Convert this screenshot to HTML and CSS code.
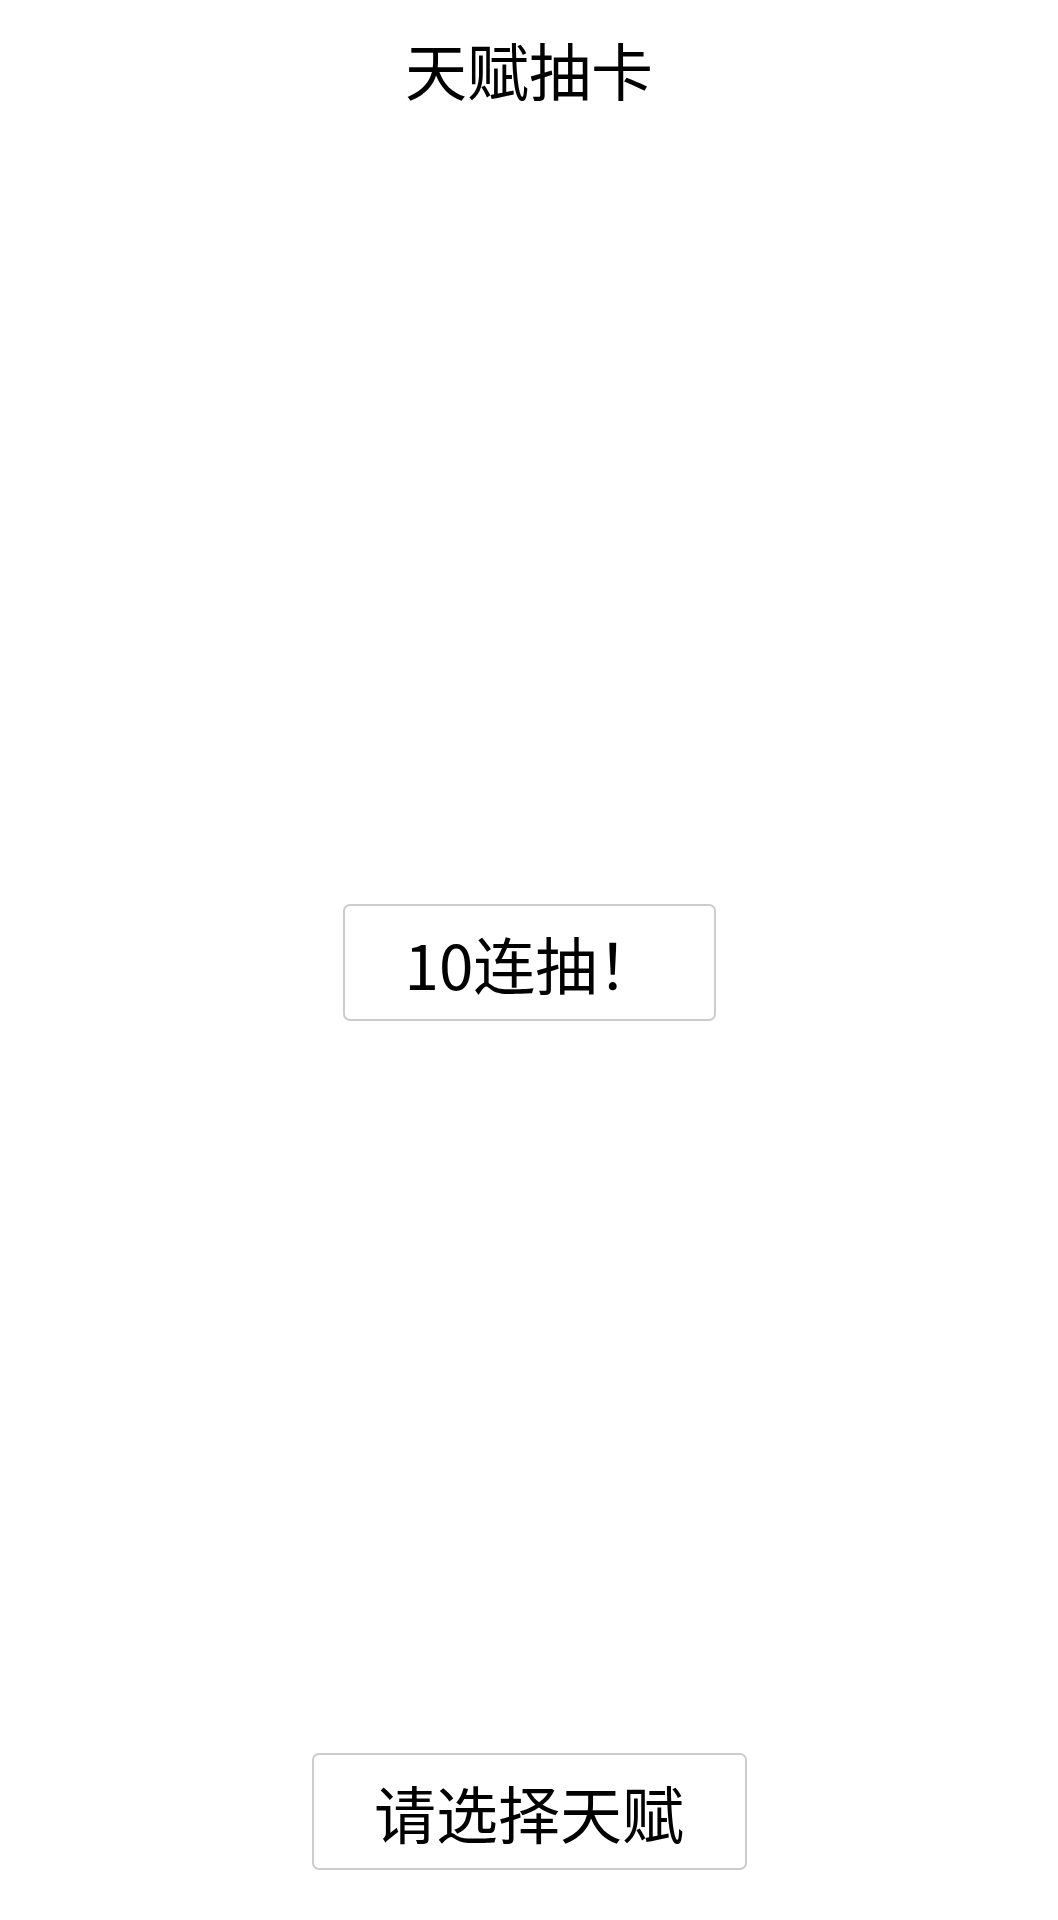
FILE: index.html
```html
<!DOCTYPE html>
<html lang="zh-CN">
<head>
<meta charset="utf-8">
<title>天赋抽卡</title>
<link rel="stylesheet" href="styles.css">
</head>
<body>
<div class="page">
  <header class="title">天赋抽卡</header>
  <main class="center">
    <button class="btn btn-draw">10连抽！</button>
  </main>
  <footer class="bottom">
    <button class="btn btn-select">请选择天赋</button>
  </footer>
</div>
</body>
</html>
```
FILE: styles.css
```css
html, body {
  margin: 0;
  padding: 0;
  background: #ffffff;
}
body {
  font-family: "Noto Sans CJK SC", "Noto Sans", sans-serif;
  color: #000;
}
.page {
  height: 1920px;
  display: flex;
  flex-direction: column;
  align-items: center;
}
.title {
  font-size: 62px;
  line-height: 62px;
  margin-top: 38px;
  text-align: center;
}
.center {
  flex: 1;
  display: flex;
  align-items: center;
  justify-content: center;
  width: 100%;
}
.bottom {
  display: flex;
  justify-content: center;
  padding-bottom: 50px;
}
.btn {
  font-family: "Noto Sans CJK SC", "Noto Sans", sans-serif;
  font-size: 62px;
  line-height: 1;
  color: #000;
  background: #fff;
  border: 2px solid #cccccc;
  border-radius: 7px;
  height: 117px;
  box-sizing: border-box;
  white-space: nowrap;
}
.btn-draw {
  width: 373px;
  margin-top: 72px;
  text-align: left;
  padding: 0 0 0 60px;
}
.btn-select {
  width: 435px;
  padding: 0;
  text-align: center;
}
```
